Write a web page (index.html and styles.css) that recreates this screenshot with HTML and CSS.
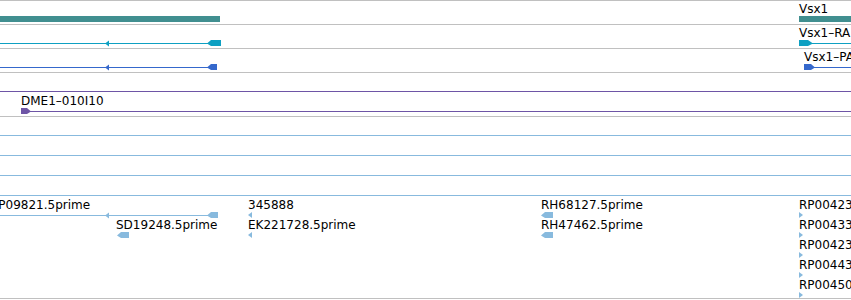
FILE: index.html
```html
<!DOCTYPE html>
<html>
<head>
  <title>Track view</title>
  <link rel="stylesheet" href="styles.css">
</head>
<body>
  <div class="browser">
    <!-- gene track -->
    <div class="track">
      <div class="row">
        <div class="feat teal" style="left:0px">
          <div class="label"></div>
          <svg class="glyph" width="220" height="6"><rect x="0" y="0" width="220" height="6"/></svg>
        </div>
        <div class="feat teal" style="left:799px">
          <div class="label">Vsx1</div>
          <svg class="glyph" width="60" height="6"><rect x="0" y="0" width="60" height="6"/></svg>
        </div>
      </div>
    </div>

    <!-- transcripts -->
    <div class="track">
      <div class="row">
        <div class="feat cyan" style="left:0px">
          <div class="label"></div>
          <svg class="glyph" width="221" height="6">
            <rect x="0" y="3" width="208" height="1"/>
            <polygon points="105,3.5 109,0.5 109,6.5"/>
            <polygon points="207,3.5 211,0 221,0 221,6 211,6"/>
          </svg>
        </div>
        <div class="feat cyan" style="left:799px">
          <div class="label">Vsx1–RA</div>
          <svg class="glyph" width="60" height="6">
            <rect x="0" y="3" width="60" height="1"/>
            <polygon points="0,0 9,0 14,3.5 9,6 0,6"/>
          </svg>
        </div>
      </div>
    </div>

    <!-- proteins -->
    <div class="track">
      <div class="row">
        <div class="feat blue" style="left:0px">
          <div class="label"></div>
          <svg class="glyph" width="217" height="6">
            <rect x="0" y="3" width="208" height="1"/>
            <polygon points="105,3.5 109,0.5 109,6.5"/>
            <polygon points="207,3.5 211,0 217,0 217,6 211,6"/>
          </svg>
        </div>
        <div class="feat blue" style="left:804px">
          <div class="label">Vsx1–PA</div>
          <svg class="glyph" width="50" height="6">
            <rect x="0" y="3" width="50" height="1"/>
            <polygon points="0,0 7,0 11,3.5 7,6 0,6"/>
          </svg>
        </div>
      </div>
    </div>

    <!-- BAC clones -->
    <div class="track">
      <div class="row">
        <div class="feat purple" style="left:0px">
          <div class="label"></div>
          <svg class="glyph" width="851" height="6"><rect x="0" y="3" width="851" height="1"/></svg>
        </div>
      </div>
      <div class="row">
        <div class="feat purple" style="left:21px">
          <div class="label">DME1–010I10</div>
          <svg class="glyph" width="830" height="6">
            <rect x="0" y="3" width="830" height="1"/>
            <polygon points="0,0 6,0 10,3.5 6,6 0,6"/>
          </svg>
        </div>
      </div>
    </div>

    <!-- ESTs -->
    <div class="track last">
      <div class="row">
        <div class="feat light" style="left:0px">
          <div class="label"></div>
          <svg class="glyph" width="851" height="6"><rect x="0" y="3" width="851" height="1"/></svg>
        </div>
      </div>
      <div class="row">
        <div class="feat light" style="left:0px">
          <div class="label"></div>
          <svg class="glyph" width="851" height="6"><rect x="0" y="3" width="851" height="1"/></svg>
        </div>
      </div>
      <div class="row">
        <div class="feat light" style="left:0px">
          <div class="label"></div>
          <svg class="glyph" width="851" height="6"><rect x="0" y="3" width="851" height="1"/></svg>
        </div>
      </div>
      <div class="row">
        <div class="feat light" style="left:0px">
          <div class="label"></div>
          <svg class="glyph" width="851" height="6"><rect x="0" y="3" width="851" height="1"/></svg>
        </div>
      </div>
      <div class="row">
        <div class="feat light" style="left:-10px">
          <div class="label">RP09821.5prime</div>
          <svg class="glyph" width="228" height="6">
            <rect x="0" y="3" width="218" height="1"/>
            <polygon points="115,3.5 119,0.5 119,6.5"/>
            <polygon points="217,3.5 221,0 228,0 228,6 221,6"/>
          </svg>
        </div>
        <div class="feat light" style="left:248px">
          <div class="label">345888</div>
          <svg class="glyph" width="5" height="6"><polygon points="0,3 4,0 4,6"/></svg>
        </div>
        <div class="feat light" style="left:541px">
          <div class="label">RH68127.5prime</div>
          <svg class="glyph" width="12" height="6"><polygon points="0,3.5 4,0 12,0 12,6 4,6"/></svg>
        </div>
        <div class="feat light" style="left:799px">
          <div class="label">RP004231.5prime</div>
          <svg class="glyph" width="5" height="6"><polygon points="0,0 4,3 0,6"/></svg>
        </div>
      </div>
      <div class="row">
        <div class="feat light" style="left:116px">
          <div class="label">SD19248.5prime</div>
          <svg class="glyph" width="13" height="6"><polygon points="1,3.5 5,0 13,0 13,6 5,6"/></svg>
        </div>
        <div class="feat light" style="left:248px">
          <div class="label">EK221728.5prime</div>
          <svg class="glyph" width="5" height="6"><polygon points="0,3 4,0 4,6"/></svg>
        </div>
        <div class="feat light" style="left:541px">
          <div class="label">RH47462.5prime</div>
          <svg class="glyph" width="12" height="6"><polygon points="0,3.5 4,0 12,0 12,6 4,6"/></svg>
        </div>
        <div class="feat light" style="left:799px">
          <div class="label">RP004336.5prime</div>
          <svg class="glyph" width="5" height="6"><polygon points="0,0 4,3 0,6"/></svg>
        </div>
      </div>
      <div class="row">
        <div class="feat light" style="left:799px">
          <div class="label">RP004237.5prime</div>
          <svg class="glyph" width="5" height="6"><polygon points="0,0 4,3 0,6"/></svg>
        </div>
      </div>
      <div class="row">
        <div class="feat light" style="left:799px">
          <div class="label">RP004431.5prime</div>
          <svg class="glyph" width="5" height="6"><polygon points="0,0 4,3 0,6"/></svg>
        </div>
      </div>
      <div class="row">
        <div class="feat light" style="left:799px">
          <div class="label">RP004501.5prime</div>
          <svg class="glyph" width="5" height="6"><polygon points="0,0 4,3 0,6"/></svg>
        </div>
      </div>
    </div>
  </div>
</body>
</html>
```

FILE: styles.css
```css
body {
  margin: 0;
  background: #fff;
  font-family: "DejaVu Sans", sans-serif;
  font-size: 12px;
  color: #000;
}
.browser {
  width: 851px;
  height: 300px;
  overflow: hidden;
}
/* each track is a band between grey rules */
.track {
  position: relative;
  border-top: 1px solid #c0c0c0;
  padding: 1px 0 2px;
}
.track.last {
  padding-bottom: 0;
  border-bottom: 1px solid #c0c0c0;
}
.row {
  position: relative;
  height: 20px;
}
/* features sit at their genomic x position */
.feat {
  position: absolute;
  top: 0;
}
.label {
  height: 14px;
  line-height: 14px;
  white-space: nowrap;
}
.glyph {
  display: block;
  overflow: visible;
}
.teal { fill: #418f90; }
.cyan { fill: #0ea0c2; }
.blue { fill: #3568cc; }
.purple { fill: #6e55a6; }
.light { fill: #88bade; }
```
